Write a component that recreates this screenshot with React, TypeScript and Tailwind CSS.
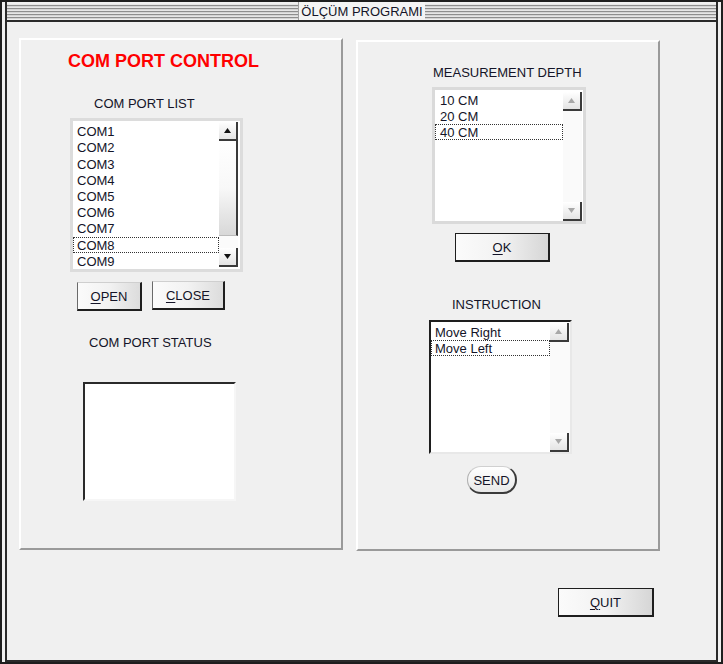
import type { ReactNode } from 'react'

const font = { fontFamily: '"Liberation Sans", Arial, sans-serif' }

function Arrow({ up, disabled }: { up?: boolean; disabled?: boolean }) {
  const fill = disabled ? '#a8a8a8' : '#111111'
  return (
    <svg width="7" height="5" viewBox="0 0 7 5" aria-hidden>
      {up ? <polygon points="3.5,0 7,5 0,5" fill={fill} /> : <polygon points="0,0 7,0 3.5,5" fill={fill} />}
    </svg>
  )
}

function ScrollButton({ up, disabled }: { up?: boolean; disabled?: boolean }) {
  return (
    <div className="flex h-[19px] w-[19px] shrink-0 items-center justify-center border-r-2 border-b-2 border-r-[#3a3a3a] border-b-[#3a3a3a] bg-gradient-to-b from-white to-[#e4e4e4]">
      <Arrow up={up} disabled={disabled} />
    </div>
  )
}

interface ListBoxProps {
  items: string[]
  focused: number
  frame: string
  rowH: string
  listPad: string
  colPad: string
  scroll: ReactNode
}

function ListBox({ items, focused, frame, rowH, listPad, colPad, scroll }: ListBoxProps) {
  return (
    <div className={`flex bg-white ${frame}`}>
      <div className={`flex min-w-0 flex-1 flex-col ${colPad}`}>
        {items.map((it, i) => (
          <div
            key={it}
            className={`${rowH} pl-[4px] pt-[1px] text-[13px] leading-none flex items-center text-[#141428] ${
              i === focused ? 'outline outline-1 outline-dotted outline-[#333] -outline-offset-1' : ''
            } ${listPad}`}
          >
            {it}
          </div>
        ))}
      </div>
      {scroll}
    </div>
  )
}

function Button({ label, className }: { label: string; className: string }) {
  return (
    <div
      className={`flex items-center justify-center pt-[2px] border-t border-l border-t-[#cfcfcf] border-l-[#6a6a6a] border-r-2 border-b-2 border-r-[#1e1e1e] border-b-[#1e1e1e] bg-gradient-to-r from-[#fbfbfb] via-[#f2f2f2] to-[#dcdcdc] text-[13px] text-[#141428] ${className}`}
    >
      <span className="underline decoration-1 underline-offset-2">{label[0]}</span>
      {label.slice(1)}
    </div>
  )
}

function DefaultButton({ label, className }: { label: string; className: string }) {
  return (
    <div
      className={`flex items-center justify-center pt-[1px] border border-[#1e1e1e] border-r-2 border-b-2 bg-gradient-to-r from-[#fbfbfb] via-[#f2f2f2] to-[#d6d6d6] text-[13px] text-[#141428] ${className}`}
    >
      <span className="underline decoration-1 underline-offset-2">{label[0]}</span>
      {label.slice(1)}
    </div>
  )
}

const panel = 'flex flex-col border-2 border-t-white border-l-white border-r-[#9a9a9a] border-b-[#9a9a9a]'
const stripes =
  'h-[15px] flex-1 bg-[repeating-linear-gradient(to_bottom,#e6e6e6_0px,#e6e6e6_1px,#8e8e8e_1px,#8e8e8e_2px,#d4d4d4_2px,#d4d4d4_3px)]'

export default function App() {
  const ports = ['COM1', 'COM2', 'COM3', 'COM4', 'COM5', 'COM6', 'COM7', 'COM8', 'COM9']

  return (
    <div style={font} className="h-[664px] w-[723px] border-2 border-[#1e1e1e] bg-[#f0f0f0] px-[3px] select-none">
      <div className="flex h-full flex-col border-x-2 border-b-2 border-[#2a2a2a]">
        {/* title bar */}
        <div className="flex h-[20px] shrink-0 items-center border-b-2 border-[#2a2a2a]">
          <div className={stripes} />
          <div className="flex h-full items-center border-l border-[#a0a0a0] bg-[#f4f4f4] px-[2px] pt-[1px] text-[13px] leading-none text-[#141428]">
            ÖLÇÜM PROGRAMI
          </div>
          <div className={stripes} />
        </div>

        <div className="flex flex-col">
          <div className="ml-[12px] mt-[16px] flex items-start gap-[13px]">
            {/* left panel */}
            <div className={`${panel} h-[512px] w-[324px]`}>
              <div className="ml-[47px] mt-[11px] h-[20px] text-[18px] font-bold leading-[20px] text-[#ff0000]">
                COM PORT CONTROL
              </div>
              <div className="ml-[73px] mt-[25px] h-[16px] text-[13px] leading-[16px] text-[#141428]">COM PORT LIST</div>
              <div className="ml-[49px] mt-[6px] h-[154px] w-[173px]">
                <ListBox
                  items={ports}
                  focused={7}
                  frame="h-full border-[3px] border-[#dcdcdc]"
                  rowH="h-[16.3px]"
                  listPad=""
                  colPad="pt-[2px]"
                  scroll={
                    <div className="mr-[2px] mt-[1px] flex w-[19px] flex-col">
                      <ScrollButton up />
                      <div className="h-[95px] border-r-2 border-b border-r-[#3a3a3a] border-b-[#bbbbbb] bg-gradient-to-b from-white via-[#f8f8f8] to-[#d8d8d8]" />
                      <div className="h-[12px] bg-[#fbfbfb]" />
                      <ScrollButton />
                    </div>
                  }
                />
              </div>
              <div className="ml-[56px] mt-[9px] flex items-start gap-[10px]">
                <Button label="OPEN" className="mt-[1px] h-[29px] w-[65px]" />
                <Button label="CLOSE" className="h-[29px] w-[73px]" />
              </div>
              <div className="ml-[68px] mt-[24px] h-[16px] text-[13px] leading-[16px] text-[#141428]">COM PORT STATUS</div>
              <div className="ml-[62px] mt-[31px] h-[119px] w-[153px] border-2 border-t-[#2a2a2a] border-l-[#2a2a2a] border-r-[#f6f6f6] border-b-[#f6f6f6] bg-white" />
            </div>

            {/* right panel */}
            <div className={`${panel} mt-[2px] h-[511px] w-[304px]`}>
              <div className="ml-[75px] mt-[23px] h-[16px] text-[13px] leading-[16px] text-[#141428]">MEASUREMENT DEPTH</div>
              <div className="ml-[74px] mt-[6px] h-[137px] w-[154px]">
                <ListBox
                  items={['10 CM', '20 CM', '40 CM']}
                  focused={2}
                  frame="h-full border-[3px] border-[#dadada] pt-[1px]"
                  rowH="h-[16px]"
                  listPad="pl-[5px]"
                  colPad="pt-[1px]"
                  scroll={
                    <div className="mr-[1px] mt-[1px] flex w-[19px] flex-col bg-[#fafafa]">
                      <ScrollButton up disabled />
                      <div className="flex-1" />
                      <ScrollButton disabled />
                    </div>
                  }
                />
              </div>
              <DefaultButton label="OK" className="ml-[97px] mt-[9px] h-[29px] w-[95px]" />
              <div className="ml-[94px] mt-[35px] h-[16px] text-[13px] leading-[16px] text-[#141428]">INSTRUCTION</div>
              <div className="ml-[71px] mt-[7px] h-[134px] w-[143px]">
                <ListBox
                  items={['Move Right', 'Move Left']}
                  focused={1}
                  frame="h-full border-2 border-t-[#1e1e1e] border-l-[#1e1e1e] border-r-[#e8e8e8] border-b-[#e8e8e8] pt-[1px]"
                  rowH="h-[16px]"
                  listPad=""
                  colPad="pt-[1px]"
                  scroll={
                    <div className="flex w-[20px] flex-col bg-[#fafafa]">
                      <ScrollButton up disabled />
                      <div className="flex-1" />
                      <ScrollButton disabled />
                    </div>
                  }
                />
              </div>
              <div className="ml-[109px] mt-[12px] flex h-[28px] w-[50px] items-center justify-center rounded-full border border-t-[#d0d0d0] border-l-[#b0b0b0] border-r-2 border-b-2 border-r-[#3a3a3a] border-b-[#3a3a3a] bg-gradient-to-b from-white to-[#e8e8e8] pt-[2px] text-[13px] text-[#141428]">
                SEND
              </div>
            </div>
          </div>

          <DefaultButton label="QUIT" className="ml-[551px] mt-[37px] h-[29px] w-[96px]" />
        </div>
      </div>
    </div>
  )
}
